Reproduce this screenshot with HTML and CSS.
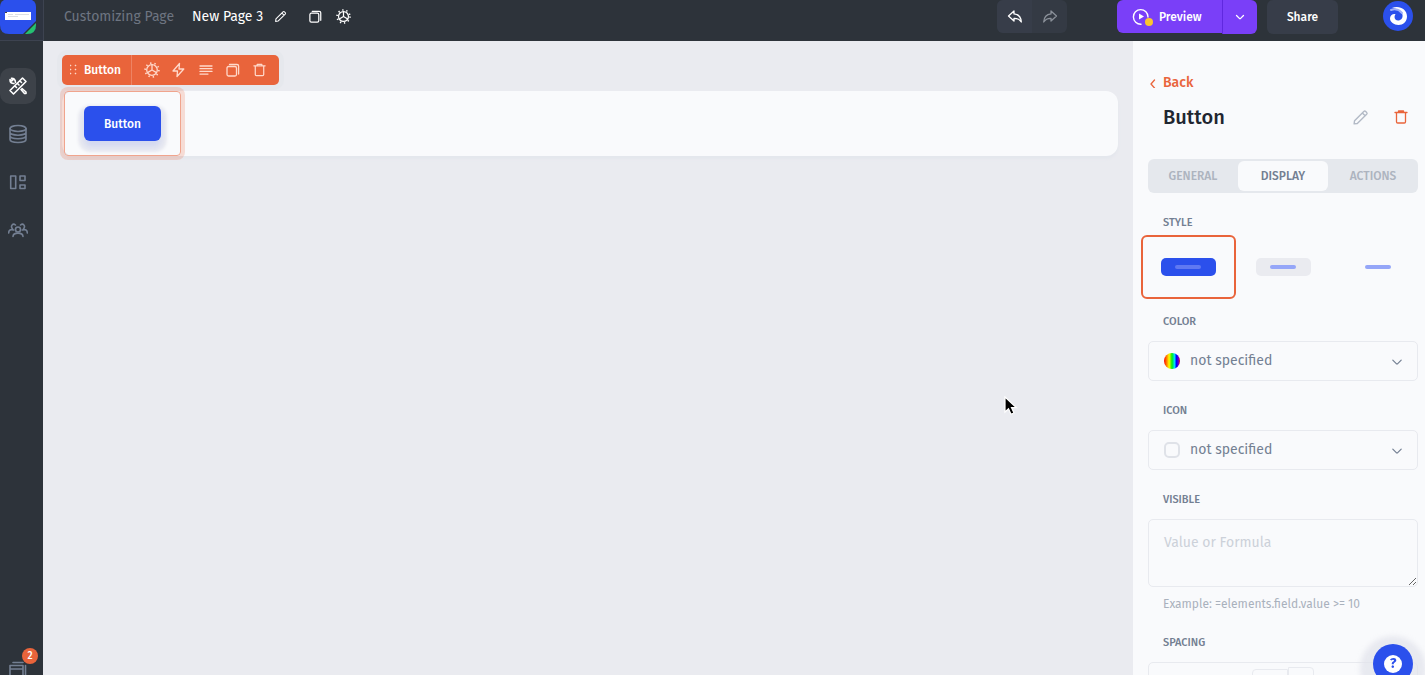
FILE: index.html
```html
<!DOCTYPE html>
<html lang="en">

<head>
  <meta charset="utf-8">
  <meta name="viewport" content="width=device-width, initial-scale=1.0">
  <title>New Page 3</title>
  <link rel="stylesheet" href="styles.css">
</head>

<body>
  <!-- shared icons -->
  <svg class="defs" width="0" height="0">
    <symbol id="gear" viewBox="0 0 16 16">
      <circle cx="8" cy="8" r="5.3" />
      <circle cx="8" cy="8" r="6.9" stroke-width="1.7" stroke-linecap="butt" stroke-dasharray="1.4 2.935" />
      <path d="M8 2.800V8l4.500 2.600M8 8l-4.500 2.600" />
    </symbol>
    <symbol id="copy" viewBox="0 0 16 16">
      <rect x="2" y="4.5" width="9.5" height="9.5" rx="1.5" />
      <path d="M4.500 2.500H12a1.600 1.600 0 0 1 1.600 1.600v8" />
    </symbol>
    <symbol id="trash" viewBox="0 0 16 16">
      <path d="M2 3.500h12M5.500 3V2h5v1M3.500 3.500v9.300A1.200 1.200 0 0 0 4.700 14h6.600a1.200 1.200 0 0 0 1.200-1.200V3.500" />
    </symbol>
    <symbol id="pencil" viewBox="0 0 16 16">
      <path d="M2 14l.4-3 8.700-8.700a1.300 1.300 0 0 1 1.800 0l.9.9a1.300 1.300 0 0 1 0 1.800L5 13.600zM9.700 3.700l2.700 2.700" />
    </symbol>
    <symbol id="chevron" viewBox="0 0 10 10">
      <path d="M1.500 3.500l2.900 2.900q.6.500 1.200 0L8.500 3.500" />
    </symbol>
    <symbol id="reply" viewBox="0 0 16 16">
      <path d="M7 2L1.500 7 7 12V9.300c3.200-.2 5.400.8 7.300 3.700C14 8.500 11.400 5.300 7 4.900z" />
    </symbol>
  </svg>

  <header class="topbar">
    <a class="logo" href="#" aria-label="Home">
      <svg width="36" height="34" viewBox="0 0 36 34">
        <path d="M4 0h28q4 2 4 7v18q0 9-9 9H9q-9 0-9-9V7q0-5 4-7z" fill="#2b50ec" />
        <path d="M5 12h26v8H5z" fill="#fff" />
        <path d="M8 14.500h5M15 14.500h14M8 16.500h10" stroke="#c5cad2" stroke-width=".6" />
        <path d="M5 12h2v1H5z" fill="#444" />
        <path d="M36 21v4q0 9-9 9h-4z" fill="#2d333a" />
        <path d="M36 23v2q0 9-9 9h-2z" fill="#25c16f" />
      </svg>
    </a>
    <span class="mode">Customizing Page</span>
    <span class="page-name">New Page 3</span>
    <button class="icon-btn rename" aria-label="Rename"><svg class="icon" width="13" height="13"><use href="#pencil" /></svg></button>
    <button class="icon-btn duplicate" aria-label="Duplicate"><svg class="icon" width="15" height="15"><use href="#copy" /></svg></button>
    <button class="icon-btn" aria-label="Settings"><svg class="icon" width="15" height="15"><use href="#gear" /></svg></button>

    <div class="history">
      <button aria-label="Undo"><svg class="icon" width="16" height="16"><use href="#reply" /></svg></button>
      <button class="redo" aria-label="Redo" disabled><svg class="icon" width="16" height="16"><use href="#reply" /></svg></button>
    </div>
    <div class="preview">
      <button class="preview-main">
        <svg width="22" height="20" viewBox="0 0 22 20" fill="none">
          <path d="M9 17.200A7.300 7.300 0 1 1 16 10" stroke="#fff" stroke-width="1.4" stroke-linecap="round" />
          <path d="M7 6.500v6l5-3z" fill="#fff" />
          <circle cx="17" cy="15" r="4" fill="#fbc52d" />
        </svg>
        Preview
      </button>
      <button class="preview-more" aria-label="Preview options"><svg class="icon" width="10" height="10"><use href="#chevron" /></svg></button>
    </div>
    <button class="share">Share</button>
    <a class="avatar" href="#" aria-label="Account">
      <svg width="30" height="30" viewBox="0 0 30 30" fill="none">
        <circle cx="15" cy="15" r="15" fill="#2b50ec" />
        <path d="M9 7C16 4 24 8 24 15.500c0 5-4 8.500-8.500 8.500C11 24 7 21 7 17.500c0-3 2.500-5 5.500-4.500-2 3-.5 6.500 2.500 6.500s5-2.500 4.500-5.500C19 10 14 7.500 9 7z" fill="#fff" />
        <path d="M8 9c4-1.500 8-.5 11 3" stroke="#9fb0fa" stroke-width="2" stroke-linecap="round" />
      </svg>
    </a>
  </header>

  <div class="workspace">
    <nav class="sidebar">
      <a class="active" href="#" aria-label="Design">
        <svg class="icon" width="20" height="20" viewBox="0 0 20 20">
          <path d="M14.500 2l3.500 3.500L5.500 18 2 14.500zM12 5l1.500 1.500M9.500 7.500L11 9M7 10l1.500 1.500M7.500 6.500C7.500 3.500 5.500 2 3.500 2.200L5 4 3.800 5 2 3.700C2 6 3.500 7.500 6 7.500M13 13.500l3.500 4H18V16l-4-3.500" />
        </svg>
      </a>
      <a href="#" aria-label="Data">
        <svg class="icon" width="20" height="20" viewBox="0 0 20 20">
          <ellipse cx="10" cy="4.500" rx="8" ry="3" />
          <path d="M2 4.500v11c0 1.700 3.600 3 8 3s8-1.300 8-3v-11M2 8.200c0 1.700 3.600 3 8 3s8-1.300 8-3M2 11.800c0 1.700 3.600 3 8 3s8-1.300 8-3" />
        </svg>
      </a>
      <a href="#" aria-label="Layouts">
        <svg class="icon" width="20" height="20" viewBox="0 0 20 20">
          <path d="M2.700 4h5v12.500h-5zM12 4h5v4.500h-5zM12 13h5v3.500h-5z" />
        </svg>
      </a>
      <a href="#" aria-label="Users">
        <svg class="icon" width="20" height="20" viewBox="0 0 20 20">
          <circle cx="10" cy="9.500" r="2.500" />
          <path d="M5 16.500c.2-4.500 9.800-4.500 10 0M4.500 9C2 5.500 5 3 7.500 5M15.500 9C18 5.500 15 3 12.500 5M.7 13c0-3 2-4 5-3M19.300 13c0-3-2-4-5-3" />
        </svg>
      </a>
      <a class="pages" href="#" aria-label="Pages">
        <svg class="icon" width="20" height="14" viewBox="0 0 20 14">
          <path d="M2 4.500h13V20H2zM2 8h13M5 1.500h10M17.500 4.500V16" />
        </svg>
        <span class="badge">2</span>
      </a>
    </nav>

    <main class="canvas">
      <div class="element-bar">
        <svg class="grip" width="8" height="12" viewBox="0 0 8 12" fill="currentColor">
          <path d="M0 1h1v1H0zM5 1h1v1H5zM0 5h1v1H0zM5 5h1v1H5zM0 9h1v1H0zM5 9h1v1H5z" stroke="currentColor" stroke-width=".5" />
        </svg>
        <span class="element-name">Button</span>
        <div class="element-tools">
          <button aria-label="Settings"><svg class="icon" width="16" height="16"><use href="#gear" /></svg></button>
          <button aria-label="Actions"><svg class="icon" width="15" height="16" viewBox="0 0 15 16"><path d="M8.500 1.500L2 9h4.500L6 14.500 12.800 7H8z" /></svg></button>
          <button aria-label="Align"><svg class="icon" width="14" height="12" viewBox="0 0 14 12"><path d="M1 2h12M1 4.700h12M1 7.400h12M1 10.100h8" /></svg></button>
          <button aria-label="Duplicate"><svg class="icon" width="16" height="16"><use href="#copy" /></svg></button>
          <button aria-label="Delete"><svg class="icon" width="15" height="16"><use href="#trash" /></svg></button>
        </div>
      </div>
      <section class="block">
        <div class="selected">
          <button class="page-button">Button</button>
        </div>
      </section>
      <svg class="cursor" width="14" height="20" viewBox="0 0 14 20">
        <path d="M1 1v15l3.500-3.300L7 18.300l3-1.300-2.500-5.300h5z" fill="#000" stroke="#fff" stroke-width="1.200" />
      </svg>
    </main>

    <aside class="panel">
      <a class="back" href="#">
        <svg class="icon" width="10" height="10" viewBox="0 0 10 10"><path d="M6.500 2L3 6l3.500 4" /></svg>
        Back
      </a>
      <div class="panel-head">
        <h1>Button</h1>
        <button class="edit" aria-label="Rename element"><svg class="icon" width="17" height="17"><use href="#pencil" /></svg></button>
        <button class="delete" aria-label="Delete element"><svg class="icon" width="16" height="16"><use href="#trash" /></svg></button>
      </div>
      <div class="tabs">
        <button>GENERAL</button>
        <button class="current">DISPLAY</button>
        <button>ACTIONS</button>
      </div>

      <fieldset class="styles">
        <legend class="label">STYLE</legend>
        <div class="style-list">
          <label><input type="radio" name="style" aria-label="Filled" checked><span class="sample filled"><i></i></span></label>
          <label><input type="radio" name="style" aria-label="Soft"><span class="sample soft"><i></i></span></label>
          <label><input type="radio" name="style" aria-label="Plain"><span class="sample plain"><i></i></span></label>
        </div>
      </fieldset>

      <div class="field">
        <label class="label" for="color">COLOR</label>
        <div class="select">
          <span class="swatch rainbow"></span>
          <select id="color">
            <option>not specified</option>
          </select>
          <svg class="icon arrow" width="12" height="12"><use href="#chevron" /></svg>
        </div>
      </div>
      <div class="field">
        <label class="label" for="icon">ICON</label>
        <div class="select">
          <span class="swatch empty"></span>
          <select id="icon">
            <option>not specified</option>
          </select>
          <svg class="icon arrow" width="12" height="12"><use href="#chevron" /></svg>
        </div>
      </div>
      <div class="field">
        <label class="label" for="visible">VISIBLE</label>
        <textarea id="visible" placeholder="Value or Formula"></textarea>
        <p class="hint">Example: =elements.field.value &gt;= 10</p>
      </div>
      <div class="field">
        <span class="label">SPACING</span>
        <div class="spacing">
          <span class="side"></span>
          <span class="side top"></span>
        </div>
      </div>
    </aside>
  </div>

  <button class="help" aria-label="Help"><span>?</span></button>
</body>

</html>
```
FILE: styles.css
```css
* {
  box-sizing: border-box;
}

body, h1, p, fieldset, legend {
  margin: 0;
  padding: 0;
  border: 0;
}

body {
  display: flex;
  flex-direction: column;
  height: 100vh;
  overflow: hidden;
  background: #eaebf0;
  color: #737f92;
  font: 14px/20px "Fira Sans", "Noto Sans", sans-serif;
}

button, select, textarea {
  margin: 0;
  padding: 0;
  border: 0;
  background: none;
  color: inherit;
  font: inherit;
}

button {
  display: flex;
  align-items: center;
  justify-content: center;
  cursor: pointer;
}

a {
  color: inherit;
  text-decoration: none;
}

.defs {
  position: absolute;
}

.icon {
  flex: none;
  fill: none;
  stroke: currentColor;
  stroke-width: 1.3;
  stroke-linecap: round;
  stroke-linejoin: round;
}

/* top bar */
.topbar {
  display: flex;
  flex: none;
  align-items: flex-start;
  height: 41px;
  padding-right: 12px;
  background: #2d333a;
  color: #fff;
  line-height: 34px;
}

.topbar .icon-btn {
  height: 32px;
}

.logo {
  width: 44px;
  height: 41px;
  margin-right: 20px;
  border-right: 1px solid #3d4350;
  border-bottom: 1px solid #3d4350;
  background: #2e3440;
  line-height: 0;
}

.mode {
  width: 128px;
  color: #6e7581;
  white-space: nowrap;
}

.page-name {
  white-space: nowrap;
}

.rename {
  margin: 0 21px 0 11px;
}

.duplicate {
  margin-right: 13px;
}

.history {
  display: flex;
  margin-left: auto;
  border-radius: 6px;
  background: #343a44;
  overflow: hidden;
}

.history button {
  width: 35px;
  height: 33px;
  background: #373d49;
}

.history .redo {
  background: none;
  color: #8a9099;
}

.redo .icon {
  transform: scaleX(-1);
}

.preview {
  display: flex;
  margin: 0 10px 0 50px;
  font-size: 12px;
  font-weight: 500;
}

.preview button {
  height: 34px;
  background: #7a3ff8;
}

.preview .preview-main {
  justify-content: flex-start;
  gap: 5px;
  width: 105px;
  height: 33px;
  padding-left: 15px;
  border-radius: 6px 0 0 6px;
}

.preview .preview-more {
  width: 35px;
  border-left: 1px solid #6028df;
  border-radius: 0 6px 6px 0;
}

.share {
  width: 71px;
  height: 34px;
  border-radius: 6px;
  background: #373d49;
  font-size: 12px;
  font-weight: 500;
}

.avatar {
  margin: 1px 0 0 45px;
  line-height: 0;
}

/* left menu */
.workspace {
  display: flex;
  flex: 1;
  min-height: 0;
}

.sidebar {
  display: flex;
  flex: none;
  flex-direction: column;
  gap: 12px;
  width: 43px;
  padding-top: 27px;
  background: #2d333a;
}

.sidebar a {
  display: flex;
  align-items: center;
  justify-content: center;
  width: 36px;
  height: 36px;
  border-radius: 10px;
}

.sidebar .icon {
  stroke-width: 1.6;
}

.sidebar .active {
  background: #3d4249;
  color: #fff;
}

.sidebar .pages {
  position: relative;
  align-items: flex-end;
  height: 28px;
  margin-top: auto;
}

.badge {
  position: absolute;
  top: 1px;
  left: 22px;
  width: 16px;
  height: 16px;
  border-radius: 50%;
  background: #e9643b;
  color: #fff;
  font-size: 10px;
  font-weight: 500;
  line-height: 16px;
  text-align: center;
}

/* page being edited */
.canvas {
  position: relative;
  flex: 1;
  padding: 14px 15px 0 19px;
}

.element-bar {
  display: inline-flex;
  align-items: center;
  height: 30px;
  padding-left: 8px;
  border-radius: 5px;
  background: #e9643b;
  box-shadow: 0 0 0 5px #e6e8ed;
  color: #ffd9cb;
  vertical-align: top;
}

.element-name {
  padding: 0 10px 0 6px;
  color: #fff;
  font-size: 12px;
  font-weight: 500;
}

.element-tools {
  display: flex;
  height: 30px;
  padding: 0 6px;
  border-left: 1px solid #ee8363;
}

.element-tools button {
  width: 27px;
}

.block {
  display: flex;
  margin-top: 6px;
  border-radius: 12px;
  background: #f9fafc;
  box-shadow: 0 3px 3px #e4e7ed;
}

.selected {
  margin-left: 2px;
  padding: 14px 19px;
  border: 1px solid #f0a48d;
  border-radius: 4px;
  box-shadow: 0 0 0 4px rgba(233, 100, 59, .2);
}

.page-button {
  width: 77px;
  height: 35px;
  border-radius: 6px;
  background: #2b50ec;
  box-shadow: 0 6px 6px rgba(43, 80, 236, .12), 0 5px 3px 6px #eaebf1;
  color: #fff;
  font-size: 12px;
  font-weight: 500;
}

.cursor {
  position: absolute;
  top: 355px;
  left: 961px;
}

/* settings panel */
.panel {
  flex: none;
  width: 292px;
  padding: 32px 7px 0 15px;
  background: #f9fafc;
  overflow: hidden;
}

.back {
  display: flex;
  align-items: center;
  gap: 5px;
  color: #e9643b;
  font-weight: 500;
}

.panel-head {
  display: flex;
  align-items: center;
  height: 28px;
  margin: 10px 0 28px;
  padding: 0 9px 0 15px;
}

.panel-head h1 {
  flex: 1;
  color: #1f2630;
  font-size: 20px;
  font-weight: 500;
  line-height: 28px;
}

.edit {
  margin-right: 24px;
  color: #b3bac6;
}

.delete {
  color: #e9643b;
}

.tabs {
  display: flex;
  height: 34px;
  padding: 2px 0;
  border-radius: 6px;
  background: #e5e8ed;
  color: #adb4bf;
  font-size: 12px;
  font-weight: 500;
}

.tabs button {
  flex: 1;
  border-radius: 6px;
}

.tabs .current {
  background: #f9fafc;
  color: #737f92;
}

.label {
  display: block;
  margin-bottom: 9px;
  padding-left: 15px;
  color: #737f92;
  font-size: 11px;
  font-weight: 500;
}

.styles {
  margin: 20px 0 13px;
}

.styles .label {
  margin-bottom: 2px;
}

.style-list {
  display: flex;
  margin: 0 -7px;
}

.style-list label {
  position: relative;
  display: flex;
  flex: 1;
  align-items: center;
  justify-content: center;
  height: 64px;
  border: 2px solid transparent;
  border-radius: 6px;
}

.style-list label:has(:checked) {
  border-color: #e9643b;
}

.style-list input {
  position: absolute;
  opacity: 0;
}

.sample {
  display: flex;
  align-items: center;
  justify-content: center;
  width: 55px;
  height: 18px;
  border-radius: 5px;
}

.sample i {
  width: 26px;
  height: 4px;
  border-radius: 2px;
  background: #95a6f8;
}

.filled {
  background: #2b50ec;
}

.filled i {
  background: #6079f2;
}

.soft {
  background: #eaebf0;
}

.field {
  margin-bottom: 20px;
}

.select {
  position: relative;
}

.select select {
  display: block;
  width: 100%;
  height: 40px;
  padding-left: 41px;
  border: 1px solid #e8eaef;
  border-radius: 5px;
  appearance: none;
}

.swatch {
  position: absolute;
  top: 12px;
  left: 16px;
  width: 16px;
  height: 16px;
}

.rainbow {
  border-radius: 50%;
  background: linear-gradient(90deg, #f00, #fa0 22%, #ff0 32%, #0e1 50%, #0df 66%, #00f 78%, #60c 90%, #f00);
}

.empty {
  border: 2px solid #dfe2e8;
  border-radius: 5px;
}

.arrow {
  position: absolute;
  top: 15px;
  right: 15px;
  stroke-width: 1;
}

textarea {
  display: block;
  width: 100%;
  height: 68px;
  padding: 13px 15px;
  border: 1px solid #e8eaef;
  border-radius: 5px;
  resize: vertical;
}

textarea::placeholder {
  color: #ccd1d9;
}

.hint {
  margin-top: 8px;
  padding-left: 15px;
  color: #a9b1bd;
  font-size: 12px;
  line-height: 18px;
}

.spacing {
  display: flex;
  justify-content: center;
  height: 120px;
  padding: 4px 0 0 0;
  border: 1px solid #e8eaef;
  border-radius: 5px;
}

.side {
  width: 36px;
  height: 30px;
  margin-top: 2px;
  border: 1px solid #e8eaef;
  border-radius: 4px 0 0 0;
}

.side.top {
  width: 26px;
  margin-top: 0;
  border-radius: 0 4px 0 0;
}

.help {
  position: fixed;
  right: 12px;
  bottom: -9px;
  width: 40px;
  height: 40px;
  border-radius: 50%;
  background: #2b50ec;
  box-shadow: 0 5px 5px 13px rgba(225, 227, 235, .7);
}

.help span {
  width: 18px;
  height: 18px;
  border-radius: 50%;
  background: #fff;
  color: #2b50ec;
  font-size: 14px;
  font-weight: 700;
  line-height: 18px;
}
```
